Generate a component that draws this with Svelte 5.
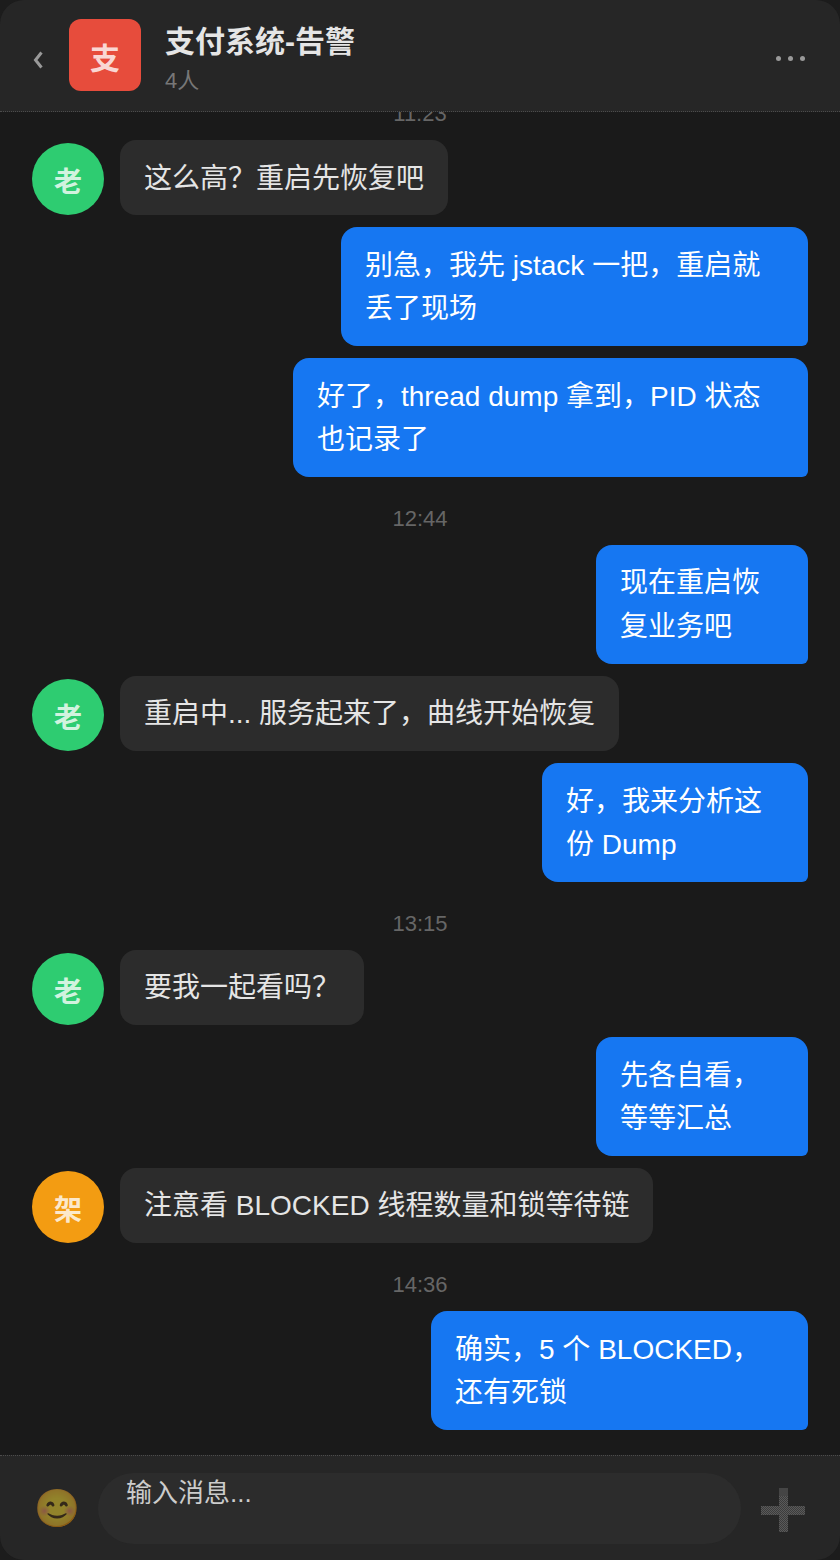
<script>
  const items = [
    { t: '11:23' },
    { a: '老', c: 'green', text: '这么高？重启先恢复吧' },
    { w: 467, text: '别急，我先 jstack 一把，重启就丢了现场' },
    { w: 515, text: '好了，thread dump 拿到，PID 状态也记录了' },
    { t: '12:44' },
    { w: 212, text: '现在重启恢复业务吧' },
    { a: '老', c: 'green', text: '重启中... 服务起来了，曲线开始恢复' },
    { w: 266, text: '好，我来分析这份 Dump' },
    { t: '13:15' },
    { a: '老', c: 'green', text: '要我一起看吗？' },
    { w: 212, text: '先各自看，等等汇总' },
    { a: '架', c: 'orange', text: '注意看 BLOCKED 线程数量和锁等待链' },
    { t: '14:36' },
    { w: 377, text: '确实，5 个 BLOCKED，还有死锁' }
  ];
</script>

<div class="phone">
  <header class="top">
    <svg class="back" width="37" height="18" viewBox="0 0 37 18" aria-hidden="true">
      <path d="M9.5 1.5 3.5 9l6 7.5" fill="none" stroke="#999" stroke-width="3" />
    </svg>
    <div class="group">支</div>
    <div class="info">
      <div class="title">支付系统-告警</div>
      <div class="count">4人</div>
    </div>
    <div class="more"><i></i><i></i><i></i></div>
  </header>

  <main class="list">
    {#each items as m}
      {#if m.t}
        <div class="time">{m.t}</div>
      {:else if m.a}
        <div class="row">
          <div class="avatar {m.c}">{m.a}</div>
          <div class="bubble in">{m.text}</div>
        </div>
      {:else}
        <div class="row mine">
          <div class="bubble out" style="width:{m.w}px">{m.text}</div>
        </div>
      {/if}
    {/each}
  </main>

  <footer class="bottom">
    <span class="emoji">😊</span>
    <div class="input">输入消息...</div>
    <svg class="plus" width="44" height="44" viewBox="0 0 44 44" aria-hidden="true">
      <defs>
        <pattern id="dither" width="2" height="2" patternUnits="userSpaceOnUse">
          <rect width="2" height="2" fill="#3c3c3c" />
          <rect width="1" height="1" fill="#5a5a5a" />
          <rect x="1" y="1" width="1" height="1" fill="#5a5a5a" />
        </pattern>
      </defs>
      <path d="M18 0h9v18h17v9H27v17h-9V27H0v-9h18z" fill="url(#dither)" />
      <rect x="18" y="0" width="9" height="8" fill="#454545" />
    </svg>
  </footer>
</div>

<style>
  :global(body) {
    margin: 0;
    background: #1c1c1c;
  }
  .phone {
    width: 840px;
    height: 1560px;
    display: flex;
    flex-direction: column;
    background: #1a1a1a;
    border-radius: 24px;
    overflow: hidden;
    font-family: "Liberation Sans", "Noto Sans CJK SC", sans-serif;
  }
  .top {
    flex: none;
    height: 110px;
    padding: 0 32px 1px;
    display: flex;
    align-items: center;
    background: #262626;
    border-bottom: 1px dotted #4c4c4c;
  }
  .back {
    flex: none;
    margin-top: 10px;
  }
  .group {
    width: 72px;
    height: 72px;
    border-radius: 12px;
    background: #e74c3c;
    color: rgba(255, 255, 255, 0.8);
    font-size: 30px;
    font-weight: 700;
    padding-top: 2px;
    box-sizing: border-box;
    display: flex;
    align-items: center;
    justify-content: center;
  }
  .info {
    flex: 1;
    margin-left: 24px;
    padding-top: 5px;
  }
  .title {
    font-size: 30px;
    font-weight: 700;
    line-height: 44px;
    color: #e5e5e5;
  }
  .count {
    font-size: 22px;
    line-height: 28px;
    margin-top: 3px;
    color: #777;
  }
  .more {
    display: flex;
    gap: 7px;
    padding: 7px 3px 0 0;
  }
  .more i {
    width: 5px;
    height: 5px;
    border-radius: 50%;
    background: #999;
  }
  .list {
    flex: 1;
    min-height: 0;
    overflow: hidden;
    display: flex;
    flex-direction: column;
    justify-content: flex-end;
    padding: 0 32px 13px;
  }
  .time {
    flex: none;
    text-align: center;
    font-size: 22px;
    line-height: 34px;
    color: #666;
    margin: 13.2px 0 8.8px;
  }
  .row {
    flex: none;
    display: flex;
    align-items: flex-end;
    gap: 16px;
    margin-bottom: 12px;
  }
  .mine {
    justify-content: flex-end;
  }
  .avatar {
    flex: none;
    box-sizing: border-box;
    width: 72px;
    height: 72px;
    padding-top: 2px;
    border-radius: 50%;
    display: flex;
    align-items: center;
    justify-content: center;
    font-size: 28px;
    font-weight: 700;
    color: rgba(255, 255, 255, 0.8);
  }
  .green { background: #2ecc71; }
  .orange { background: #f39c12; }
  .bubble {
    box-sizing: border-box;
    padding: 16.6px 24px 15.4px;
    font-size: 28px;
    line-height: 1.55;
    border-radius: 16px;
  }
  .in {
    background: #2c2c2c;
    color: #e5e5e5;
  }
  .out {
    background: #1677f2;
    color: #fff;
    border-bottom-right-radius: 6px;
  }
  .bottom {
    flex: none;
    height: 104px;
    display: flex;
    align-items: center;
    padding: 0 35px 0 32px;
    background: #262626;
    border-top: 1px dotted #4c4c4c;
  }
  .emoji {
    flex: none;
    width: 50px;
    text-align: center;
    font-size: 37px;
    line-height: 50px;
    padding-top: 2px;
    opacity: 0.5;
  }
  .input {
    flex: 1;
    height: 71px;
    margin: 0 20px 0 16px;
    padding: 0 28px;
    border-radius: 36px;
    background: #2c2c2c;
    color: #ccc;
    font-size: 26px;
    line-height: 40px;
  }
  .plus {
    flex: none;
    margin-top: 4px;
  }
</style>
